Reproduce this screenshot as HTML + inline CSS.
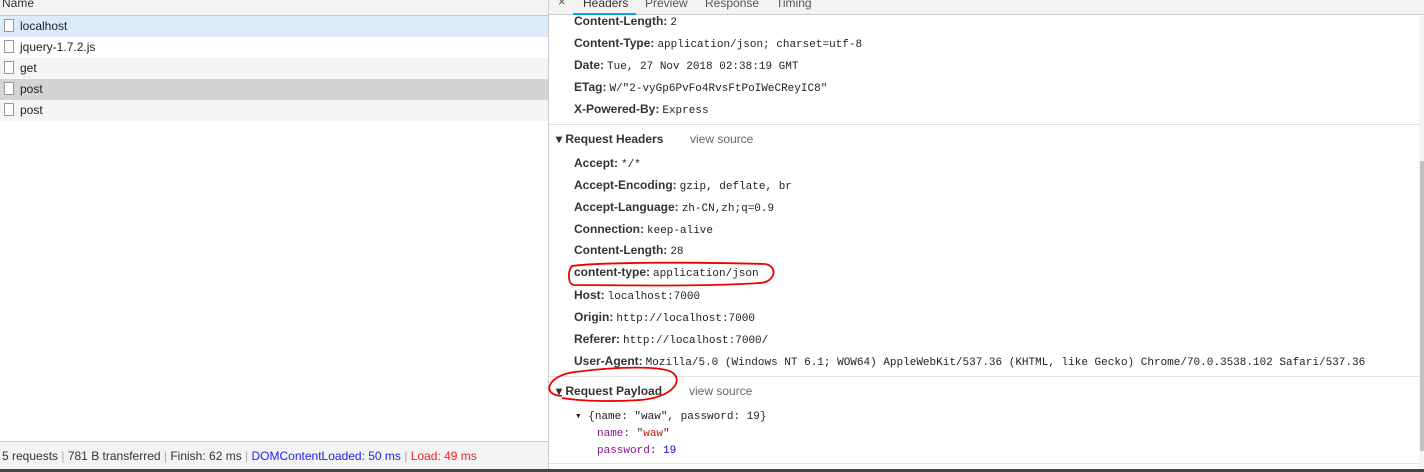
<!DOCTYPE html>
<html><head><meta charset="utf-8"><style>
*{margin:0;padding:0;box-sizing:border-box}
body{width:1424px;height:472px;overflow:hidden;background:#fff;font-family:"Liberation Sans",sans-serif;font-size:12px;color:#333;position:relative}
.a{position:absolute;white-space:nowrap}
.row{position:absolute;left:0;width:548px;height:21px}
.row span{position:absolute;left:20px;top:3px;color:#222}
.ic{position:absolute;left:4px;top:3px;width:10px;height:13px;border:1px solid #999;background:#fff}
.k{position:absolute;left:574px;font-weight:bold;color:#333;white-space:nowrap}
.k m{font-family:"Liberation Mono",monospace;font-weight:normal;font-size:11px;color:#222;margin-left:3px}
.sec{position:absolute;left:556px;font-weight:bold;color:#333}
.vs{position:absolute;color:#666;font-weight:normal}
.mono{font-family:"Liberation Mono",monospace;font-size:11px}
</style></head><body>
<div class="a" style="left:0;top:0;width:548px;height:16px;background:#f3f3f3;border-bottom:1px solid #ccc"></div>
<div class="a" style="left:2px;top:-4px;color:#333">Name</div>
<div class="a" style="left:548px;top:0;width:1px;height:469px;background:#ccc"></div>
<div class="row" style="top:16px;background:#dcebfc"><div class="ic"></div><span>localhost</span></div>
<div class="row" style="top:37px;background:#fff"><div class="ic"></div><span>jquery-1.7.2.js</span></div>
<div class="row" style="top:58px;background:#f5f5f5"><div class="ic"></div><span>get</span></div>
<div class="row" style="top:79px;background:#d4d4d4"><div class="ic"></div><span>post</span></div>
<div class="row" style="top:100px;background:#f5f5f5"><div class="ic"></div><span>post</span></div>
<div class="a" style="left:0;top:441px;width:548px;height:28px;background:#f3f3f3;border-top:1px solid #ccc"></div>
<div class="a" style="left:2px;top:449px;color:#333">5 requests <span style="color:#aaa">|</span> 781 B transferred <span style="color:#aaa">|</span> Finish: 62 ms <span style="color:#aaa">|</span> <span style="color:#2222ee">DOMContentLoaded: 50 ms</span> <span style="color:#aaa">|</span> <span style="color:#e22">Load: 49 ms</span></div>
<div class="a" style="left:0;top:469px;width:1424px;height:3px;background:#444"></div>
<!-- right -->
<div class="a" style="left:549px;top:0;width:875px;height:15px;background:#f3f3f3;border-bottom:1px solid #ccc"></div>
<div class="a" style="left:558px;top:-6px;color:#555;font-size:13px">×</div>
<div class="a" style="left:583px;top:-4px;color:#333">Headers</div>
<div class="a" style="left:645px;top:-4px;color:#555">Preview</div>
<div class="a" style="left:705px;top:-4px;color:#555">Response</div>
<div class="a" style="left:776px;top:-4px;color:#555">Timing</div>
<div class="a" style="left:573px;top:13px;width:63px;height:2px;background:#03a9f4"></div>
<div class="k" style="top:14px">Content-Length:<m>2</m></div>
<div class="k" style="top:36px">Content-Type:<m>application/json; charset=utf-8</m></div>
<div class="k" style="top:58px">Date:<m>Tue, 27 Nov 2018 02:38:19 GMT</m></div>
<div class="k" style="top:80px">ETag:<m>W/"2-vyGp6PvFo4RvsFtPoIWeCReyIC8"</m></div>
<div class="k" style="top:102px">X-Powered-By:<m>Express</m></div>
<div class="a" style="left:549px;top:124px;width:870px;height:1px;background:#e0e0e0"></div>
<div class="sec" style="top:132px">▾ Request Headers</div><div class="vs" style="left:690px;top:132px">view source</div>
<div class="k" style="top:156px">Accept:<m>*/*</m></div>
<div class="k" style="top:178px">Accept-Encoding:<m>gzip, deflate, br</m></div>
<div class="k" style="top:200px">Accept-Language:<m>zh-CN,zh;q=0.9</m></div>
<div class="k" style="top:222px">Connection:<m>keep-alive</m></div>
<div class="k" style="top:243px">Content-Length:<m>28</m></div>
<div class="k" style="top:265px">content-type:<m>application/json</m></div>
<div class="k" style="top:288px">Host:<m>localhost:7000</m></div>
<div class="k" style="top:310px">Origin:<m>http://localhost:7000</m></div>
<div class="k" style="top:332px">Referer:<m>http://localhost:7000/</m></div>
<div class="k" style="top:354px">User-Agent:<m>Mozilla/5.0 (Windows NT 6.1; WOW64) AppleWebKit/537.36 (KHTML, like Gecko) Chrome/70.0.3538.102 Safari/537.36</m></div>
<div class="a" style="left:549px;top:376px;width:870px;height:1px;background:#e0e0e0"></div>
<div class="sec" style="top:384px">▾ Request Payload</div><div class="vs" style="left:689px;top:384px">view source</div>
<div class="a mono" style="left:575px;top:409px;color:#222">▾ {name: "waw", password: 19}</div>
<div class="a mono" style="left:597px;top:428px"><span style="color:#881391">name</span>: "<span style="color:#c41a16">waw</span>"</div>
<div class="a mono" style="left:597px;top:445px"><span style="color:#881391">password</span>: <span style="color:#1c00cf">19</span></div>
<div class="a" style="left:549px;top:463px;width:870px;height:1px;background:#e0e0e0"></div>
<div class="a" style="left:1419px;top:16px;width:5px;height:453px;background:#f5f5f5"></div>
<div class="a" style="left:1420px;top:161px;width:4px;height:290px;background:#c1c1c1"></div>
<svg class="a" style="left:0;top:0" width="1424" height="472">
<path d="M572 266 C600 262 700 262 765 264 C778 266 776 282 760 283 C700 287 620 285 574 285 C567 284 568 270 572 266 Z" fill="none" stroke="#e00" stroke-width="1.8"/>
<path d="M562 396 C540 395 548 375 575 372 C620 366 665 366 673 373 C684 382 670 398 640 400 C610 402 580 401 562 398" fill="none" stroke="#e00" stroke-width="1.8"/>
</svg>
</body></html>
